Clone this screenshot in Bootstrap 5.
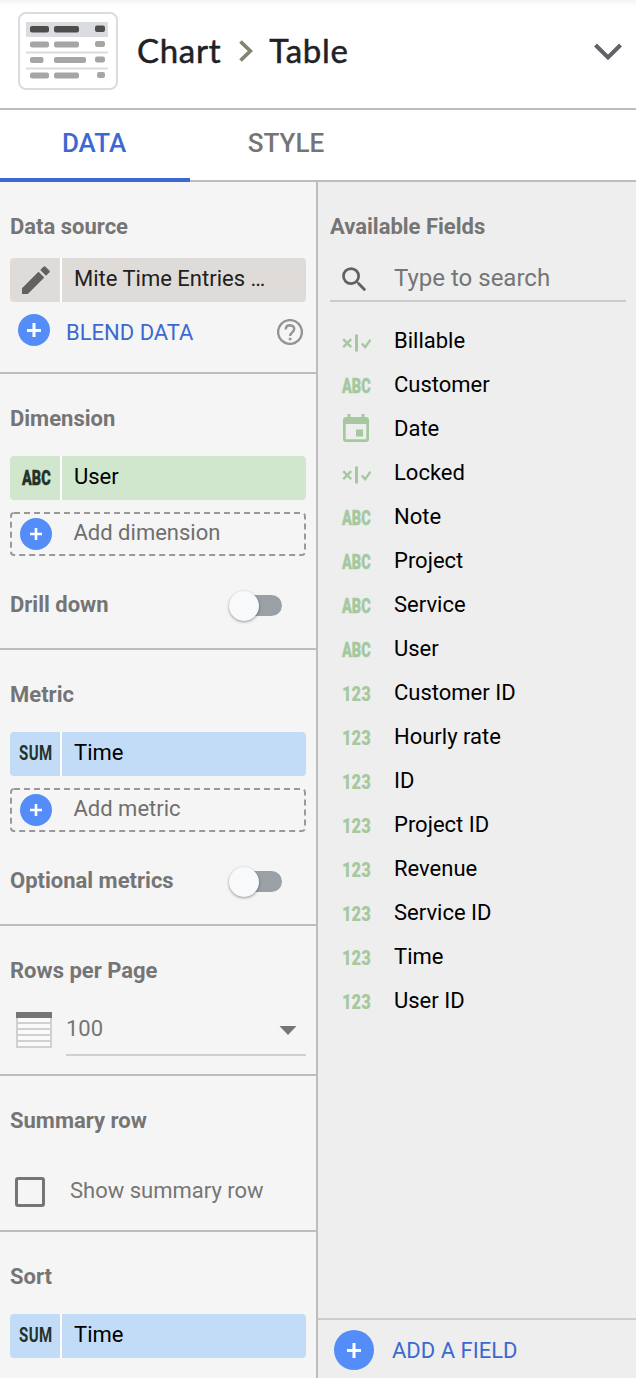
<!DOCTYPE html>
<html lang="en">
<head>
<meta charset="utf-8">
<title>Chart table properties</title>
<link href="https://cdn.jsdelivr.net/npm/bootstrap@5.3.0/dist/css/bootstrap.min.css" rel="stylesheet">
<script src="https://cdn.jsdelivr.net/npm/bootstrap@5.3.0/dist/js/bootstrap.bundle.min.js"></script>
<style>
body{font-family:Roboto,"Liberation Sans",sans-serif;font-size:22px;line-height:28px;height:1378px;overflow:hidden;background:#fff;color:#000;-webkit-font-smoothing:antialiased}
svg{display:block;flex:none}
.topbar{height:110px;border-bottom:2px solid #bdbdbd;padding:0 14px 0 18px;background:linear-gradient(#f3f3f3,#fff 6px)}
.crumb{font-family:Lato,Roboto,sans-serif;font-size:33px;line-height:40px;letter-spacing:.7px;color:#202124;-webkit-text-stroke:.5px #202124}
.crumb span{padding-bottom:2px}
.tabs{height:72px;border-bottom:2px solid #bdbdbd}
.tabs .nav-link{width:190px;height:72px;padding:0;line-height:66px;font-size:26px;font-weight:500;color:#757575;text-align:center;border-radius:0}
.tabs .nav-link.active{color:#3c69d1;border-bottom:4px solid #3c69d1;padding-right:2px}
.tabs .nav-link:last-child{padding-left:2px}
.left{width:318px;background:#f5f5f5;border-right:2px solid #bdbdbd}
.right{background:#eee}
.sect{border-bottom:2px solid #bdbdbd;padding:31px 10px 0}
.sect:last-child{border-bottom:0}
.ttl{font-size:22px;font-weight:700;line-height:28px;color:#757575;margin:0;white-space:nowrap}
.chip{height:44px;gap:2px;background:#fff;border-radius:4px;overflow:hidden;margin-top:23px}
.chip>*{background:var(--c);display:flex;align-items:center}
.chip .ic{width:50px;justify-content:center;padding:0 0 0 2px}
.chip .nm{flex:1;padding:0 0 3px 12px}
.tan{--c:#dfdbd8;color:#212121}.green{--c:#d0e6cd}.blue{--c:#c2dcf8}
.add{position:relative;height:44px;margin-top:12px;color:#6f6f6f;padding-left:10px}
.add .frame{position:absolute;left:0;top:0}
.add span{margin-left:21.500px;padding-bottom:3px}
.link{color:#3c69d1}
.tag{display:block;width:29px;font-weight:900;font-size:19.5px;line-height:20px;white-space:nowrap}
.tag b{display:inline-block;font-weight:900;transform-origin:0 50%}
.abc b{transform:scaleX(.74);-webkit-text-stroke:.4px currentColor}.num b{transform:scaleX(.85)}
.chip .abc{padding-top:1px}
.sum{width:35px;font-weight:700;font-size:19.5px}.sum b{font-weight:700;transform:scaleX(.77);letter-spacing:.6px}
.dark{color:#263228}.g{color:#a5c89f}
.tog{position:relative;width:46px;height:21px;border-radius:11px;background:#9aa0a6;margin-right:24px}
.tog i{position:absolute;left:-7px;top:-4px;width:30px;height:30px;border-radius:50%;background:#f8f9fb;box-shadow:0 1px 3px rgba(0,0,0,.4)}
.fields{padding:17px 0 0 24px;margin:0;list-style:none}
.fields li{height:44px;display:flex;align-items:center}
.fields .ico{width:52px;padding-top:3px}
.fields .cal{padding:0 0 2px 1px}
.search{height:46px;margin:15px 10px 0 12px;border-bottom:2px solid #ccc;padding-left:8px;color:#757575;font-size:24px}
.foot{height:60px;border-top:2px solid #ccc;padding-left:16px}
.box{width:30px;height:30px;border:3px solid #757575;border-radius:3px}
.sel{width:240px;height:54px;border-bottom:2px solid #d0d0d0;color:#757575;padding:2px 9px 0 0}
</style>
</head>
<body class="d-flex flex-column">
<svg width="0" height="0" class="position-absolute">
<symbol id="plus" viewBox="0 0 32 32"><circle cx="16" cy="16" r="16" fill="#548df8"/><path d="M16 10v12M10 16h12" stroke="#fff" stroke-width="2.6"/></symbol>
<symbol id="plusL" viewBox="0 0 32 32"><circle cx="16" cy="16" r="16" fill="#548df8"/><path d="M16 9v14M9 16.500h14" stroke="#fff" stroke-width="3"/></symbol>
<symbol id="plusF" viewBox="0 0 40 40"><circle cx="20" cy="20" r="20" fill="#548df8"/><path d="M20 13v15M13 20.5h14" stroke="#fff" stroke-width="3"/></symbol>
<symbol id="bool" viewBox="0 0 29 18"><path d="M1.2 5.2l8 8M9.2 5.2l-8 8M19.8 9.5l3.4 3.6 5.3-7.4" fill="none" stroke="#a5c89f" stroke-width="2.4"/><path d="M14.5.5v17" stroke="#a5c89f" stroke-width="3"/></symbol>
<symbol id="cal" viewBox="0 0 26 28"><path fill="#a5c89f" fill-rule="evenodd" d="M4.5 0h3v3h11V0h3v3H23q3 0 3 3v19q0 3-3 3H3q-3 0-3-3V6q0-3 3-3h1.500zM2.700 10v15.300h20.600V10z"/><path fill="#a5c89f" d="M13 15.500h7v7h-7z"/></symbol>
</svg>
<header class="topbar d-flex align-items-center flex-shrink-0">
<svg width="100" height="78" viewBox="0 0 100 78" style="margin-top:-6px"><rect x="1" y="1" width="98" height="76" rx="7" fill="#fff" stroke="#dadce0" stroke-width="2"/><path fill="#dadce0" d="M8 10h82v15H8zM8 39.500h82v2H8zM8 55.500h82v2H8z"/><g fill="#4d4d4d"><rect x="12" y="14" width="19" height="6.500" rx="2"/><rect x="36" y="14" width="25" height="6.500" rx="2"/><rect x="77" y="13.500" width="10" height="6.500" rx="2"/></g><g fill="#a6a6a6"><rect x="12" y="29.500" width="19" height="6" rx="2"/><rect x="36" y="29.500" width="25" height="6" rx="2"/><rect x="77" y="29" width="10" height="6" rx="2"/><rect x="12" y="45" width="13.500" height="6" rx="2"/><rect x="36" y="45" width="32" height="6" rx="2"/><rect x="77" y="44.500" width="10" height="6" rx="2"/><rect x="12" y="60.500" width="19" height="6" rx="2"/><rect x="36" y="60.500" width="25" height="6" rx="2"/><rect x="79" y="60" width="8" height="6" rx="2"/></g></svg>
<div class="crumb d-flex align-items-center" style="margin:-6px 0 0 19px"><span>Chart</span><svg width="14" height="22" viewBox="0 0 14 22" style="margin:0 16px 0 18px"><path d="M1.500 1.500L11.300 11 1.500 20.500" fill="none" stroke="#80866f" stroke-width="3.800"/></svg><span>Table</span></div>
<svg class="ms-auto" width="28" height="18" viewBox="0 0 28 18" style="margin-top:-5px"><path d="M1.500 2L14 14.500 26.500 2" fill="none" stroke="#5f6368" stroke-width="4"/></svg>
</header>
<nav class="tabs nav flex-shrink-0"><a class="nav-link active">DATA</a><a class="nav-link">STYLE</a></nav>
<main class="d-flex flex-grow-1">
<div class="left flex-shrink-0">
<section class="sect" style="height:192px"><h2 class="ttl">Data source</h2>
<div class="chip tan d-flex" style="margin-top:17px"><div class="ic"><svg width="28" height="28" viewBox="0 0 28 28"><path fill="#616161" d="M0 22.200V28h5.800L22.300 11.500 16.500 5.700zM27.300 6.500q1-1 0-2L23.500.7q-1-1-2 0L18.200 4 24 9.800z"/></svg></div><div class="nm">Mite Time Entries …</div></div>
<div class="d-flex align-items-center" style="height:36px;margin-top:10px;padding-left:8px"><svg width="32" height="32"><use href="#plusL"/></svg><span class="link" style="margin:6px 0 0 16px">BLEND DATA</span><svg class="ms-auto" width="26" height="26" viewBox="0 0 26 26" style="margin-top:4px;margin-right:3px"><circle cx="13" cy="13" r="11.900" fill="none" stroke="#949494" stroke-width="2.400"/><path d="M8.700 10.500Q8.900 6.300 13 6.300q4.200.2 4.200 3.800c0 3.200-4.100 3.300-4.100 6.900" fill="none" stroke="#949494" stroke-width="2.400"/><path d="M11.800 18.800h2.600v2.500h-2.600z" fill="#949494"/></svg></div></section>
<section class="sect" style="height:276px"><h2 class="ttl">Dimension</h2>
<div class="chip green d-flex"><div class="ic"><span class="tag abc dark"><b>ABC</b></span></div><div class="nm">User</div></div>
<div class="add d-flex align-items-center"><svg class="frame" width="296" height="44"><rect x="1" y="1" width="294" height="42" rx="3" fill="none" stroke="#999" stroke-width="2" stroke-dasharray="6 4"/></svg><svg width="32" height="32"><use href="#plus"/></svg><span>Add dimension</span></div>
<div class="d-flex align-items-center justify-content-between" style="margin-top:35px"><h2 class="ttl">Drill down</h2><div class="tog"><i></i></div></div></section>
<section class="sect" style="height:276px"><h2 class="ttl">Metric</h2>
<div class="chip blue d-flex"><div class="ic"><span class="tag sum dark"><b>SUM</b></span></div><div class="nm">Time</div></div>
<div class="add d-flex align-items-center"><svg class="frame" width="296" height="44"><rect x="1" y="1" width="294" height="42" rx="3" fill="none" stroke="#999" stroke-width="2" stroke-dasharray="6 4"/></svg><svg width="32" height="32"><use href="#plus"/></svg><span>Add metric</span></div>
<div class="d-flex align-items-center justify-content-between" style="margin-top:35px"><h2 class="ttl">Optional metrics</h2><div class="tog"><i></i></div></div></section>
<section class="sect" style="height:150px"><h2 class="ttl">Rows per Page</h2>
<div class="d-flex align-items-center" style="margin-top:17px;padding-left:6px"><svg width="36" height="36" viewBox="0 0 36 36" style="margin-right:14px;margin-top:1px"><path fill="#fafafa" d="M0 0h36v36H0z"/><path fill="none" stroke="#d0d0d0" stroke-width="2" d="M1 5v30h34V5M1 11h34M1 17h34M1 23h34M1 29h34"/><path fill="#757575" d="M0 0h36v6H0z"/></svg><div class="sel d-flex align-items-center justify-content-between"><span>100</span><svg width="18" height="9" viewBox="0 0 18 9" style="margin-top:3px"><path fill="#757575" d="M.5 0h17L9 9z"/></svg></div></div></section>
<section class="sect" style="height:156px"><h2 class="ttl">Summary row</h2>
<div class="d-flex align-items-center" style="margin-top:41px;padding-left:5px;color:#757575;height:32px"><span class="box"></span><span style="margin-left:25px;padding-bottom:3px">Show summary row</span></div></section>
<section class="sect"><h2 class="ttl">Sort</h2>
<div class="chip blue d-flex"><div class="ic"><span class="tag sum dark"><b>SUM</b></span></div><div class="nm">Time</div></div></section>
</div>
<div class="right flex-grow-1 d-flex flex-column">
<h2 class="ttl" style="padding:31px 0 0 12px">Available Fields</h2>
<div class="search d-flex align-items-center"><svg width="33" height="33" viewBox="0 0 24 24" style="margin-top:2px"><path fill="#616161" d="M15.500 14h-.79l-.28-.27A6.470 6.470 0 0 0 16 9.500 6.500 6.500 0 1 0 9.500 16c1.610 0 3.090-.59 4.230-1.570l.27.28v.79l5 4.990L20.490 19l-4.990-5zm-6 0C7.010 14 5 11.990 5 9.500S7.010 5 9.500 5 14 7.010 14 9.500 11.990 14 9.500 14z"/></svg><span style="margin-left:23px">Type to search</span></div>
<ul class="fields">
<li><span class="ico"><svg width="29" height="18"><use href="#bool"/></svg></span>Billable</li>
<li><span class="ico"><span class="tag abc g"><b>ABC</b></span></span>Customer</li>
<li><span class="ico cal"><svg width="26" height="28"><use href="#cal"/></svg></span>Date</li>
<li><span class="ico"><svg width="29" height="18"><use href="#bool"/></svg></span>Locked</li>
<li><span class="ico"><span class="tag abc g"><b>ABC</b></span></span>Note</li>
<li><span class="ico"><span class="tag abc g"><b>ABC</b></span></span>Project</li>
<li><span class="ico"><span class="tag abc g"><b>ABC</b></span></span>Service</li>
<li><span class="ico"><span class="tag abc g"><b>ABC</b></span></span>User</li>
<li><span class="ico"><span class="tag num g"><b>123</b></span></span>Customer ID</li>
<li><span class="ico"><span class="tag num g"><b>123</b></span></span>Hourly rate</li>
<li><span class="ico"><span class="tag num g"><b>123</b></span></span>ID</li>
<li><span class="ico"><span class="tag num g"><b>123</b></span></span>Project ID</li>
<li><span class="ico"><span class="tag num g"><b>123</b></span></span>Revenue</li>
<li><span class="ico"><span class="tag num g"><b>123</b></span></span>Service ID</li>
<li><span class="ico"><span class="tag num g"><b>123</b></span></span>Time</li>
<li><span class="ico"><span class="tag num g"><b>123</b></span></span>User ID</li>
</ul>
<div class="foot mt-auto d-flex align-items-center"><svg width="40" height="40" style="margin-top:2px"><use href="#plusF"/></svg><span class="link" style="margin:4px 0 0 18px">ADD A FIELD</span></div>
</div>
</main>
</body>
</html>
